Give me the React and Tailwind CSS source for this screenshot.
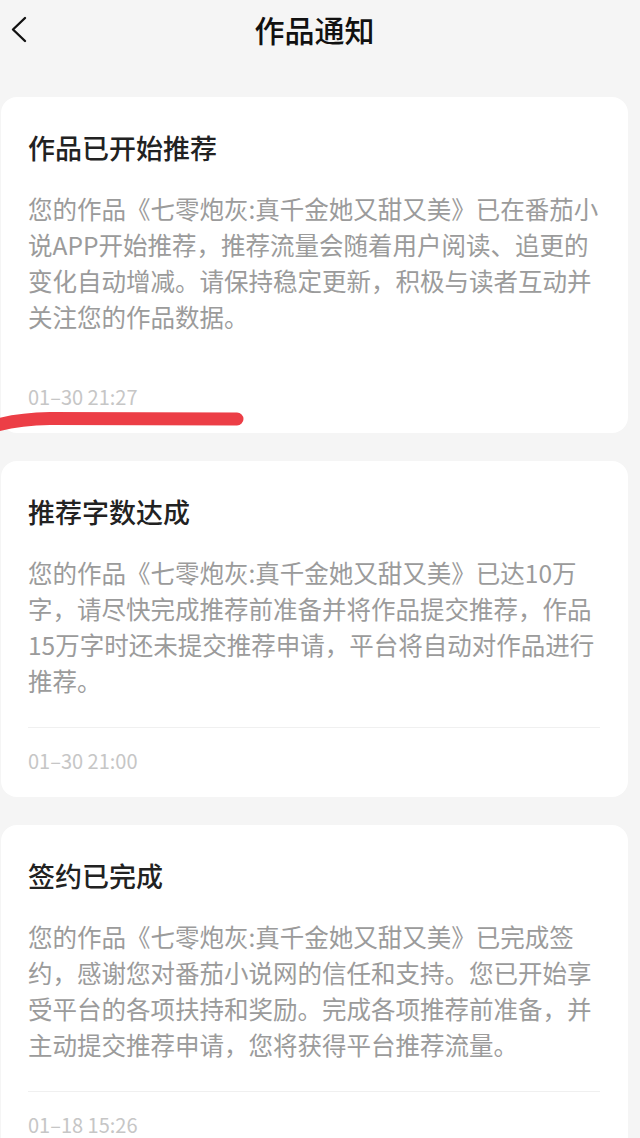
import React from "react";

const cards = [
  {
    title: "作品已开始推荐",
    lines: [
      "您的作品《七零炮灰:真千金她又甜又美》已在番茄小",
      "说APP开始推荐，推荐流量会随着用户阅读、追更的",
      "变化自动增减。请保持稳定更新，积极与读者互动并",
      "关注您的作品数据。",
    ],
    time: "01–30 21:27",
    divider: false,
    mark: true,
  },
  {
    title: "推荐字数达成",
    lines: [
      "您的作品《七零炮灰:真千金她又甜又美》已达10万",
      "字，请尽快完成推荐前准备并将作品提交推荐，作品",
      "15万字时还未提交推荐申请，平台将自动对作品进行",
      "推荐。",
    ],
    time: "01–30 21:00",
    divider: true,
  },
  {
    title: "签约已完成",
    lines: [
      "您的作品《七零炮灰:真千金她又甜又美》已完成签",
      "约，感谢您对番茄小说网的信任和支持。您已开始享",
      "受平台的各项扶持和奖励。完成各项推荐前准备，并",
      "主动提交推荐申请，您将获得平台推荐流量。",
    ],
    time: "01–18 15:26",
    divider: true,
  },
];

function Card({ card, first }) {
  return (
    <div
      className={`relative ml-[1px] w-[627px] rounded-[16px] bg-white pl-[27px] pr-[28px] pt-[33px] pb-[22px] ${
        first ? "" : "mt-[28px]"
      }`}
    >
      <div className="text-[27px] leading-[36px] font-medium text-[#222222]">
        {card.title}
      </div>
      <div className="mt-[25px] text-[24.5px] leading-[36px] text-[#9b9b9b]">
        {card.lines.map((l, i) => (
          <div key={i} className="whitespace-nowrap">
            {l}
          </div>
        ))}
      </div>
      <div
        className={`mt-[28px] h-px w-full ${
          card.divider ? "bg-[#f0f0f0]" : "bg-transparent"
        }`}
      />
      <div className="mt-[19px] text-[20px] leading-[28px] text-[#c6c6c6]">
        {card.time}
      </div>
      {card.mark && (
        <svg
          className="absolute left-[-1px] top-[305px]"
          width="260"
          height="40"
          viewBox="0 0 260 40"
        >
          <path
            d="M -6 24 Q 18 17 50 16.5 L 237 17"
            fill="none"
            stroke="#ec3e46"
            strokeWidth="13"
            strokeLinecap="round"
          />
        </svg>
      )}
    </div>
  );
}

export default function App() {
  return (
    <div
      className="min-h-[1138px] w-[640px] overflow-hidden bg-[#f5f5f5]"
      style={{ fontFamily: '"Noto Sans CJK SC", "Noto Sans", sans-serif' }}
    >
      <div className="relative flex h-[58px] items-center justify-center pr-[11px]">
        <svg
          className="absolute left-[10px] top-[16px]"
          width="18"
          height="28"
          viewBox="0 0 18 28"
        >
          <path
            d="M 15 2 L 3 13.5 L 15 25"
            fill="none"
            stroke="#111111"
            strokeWidth="2.4"
            strokeLinecap="round"
            strokeLinejoin="round"
          />
        </svg>
        <span className="text-[30px] leading-[40px] font-medium text-[#111111]">
          作品通知
        </span>
      </div>
      <div className="pt-[39px]">
        {cards.map((c, i) => (
          <Card key={i} card={c} first={i === 0} />
        ))}
      </div>
    </div>
  );
}
